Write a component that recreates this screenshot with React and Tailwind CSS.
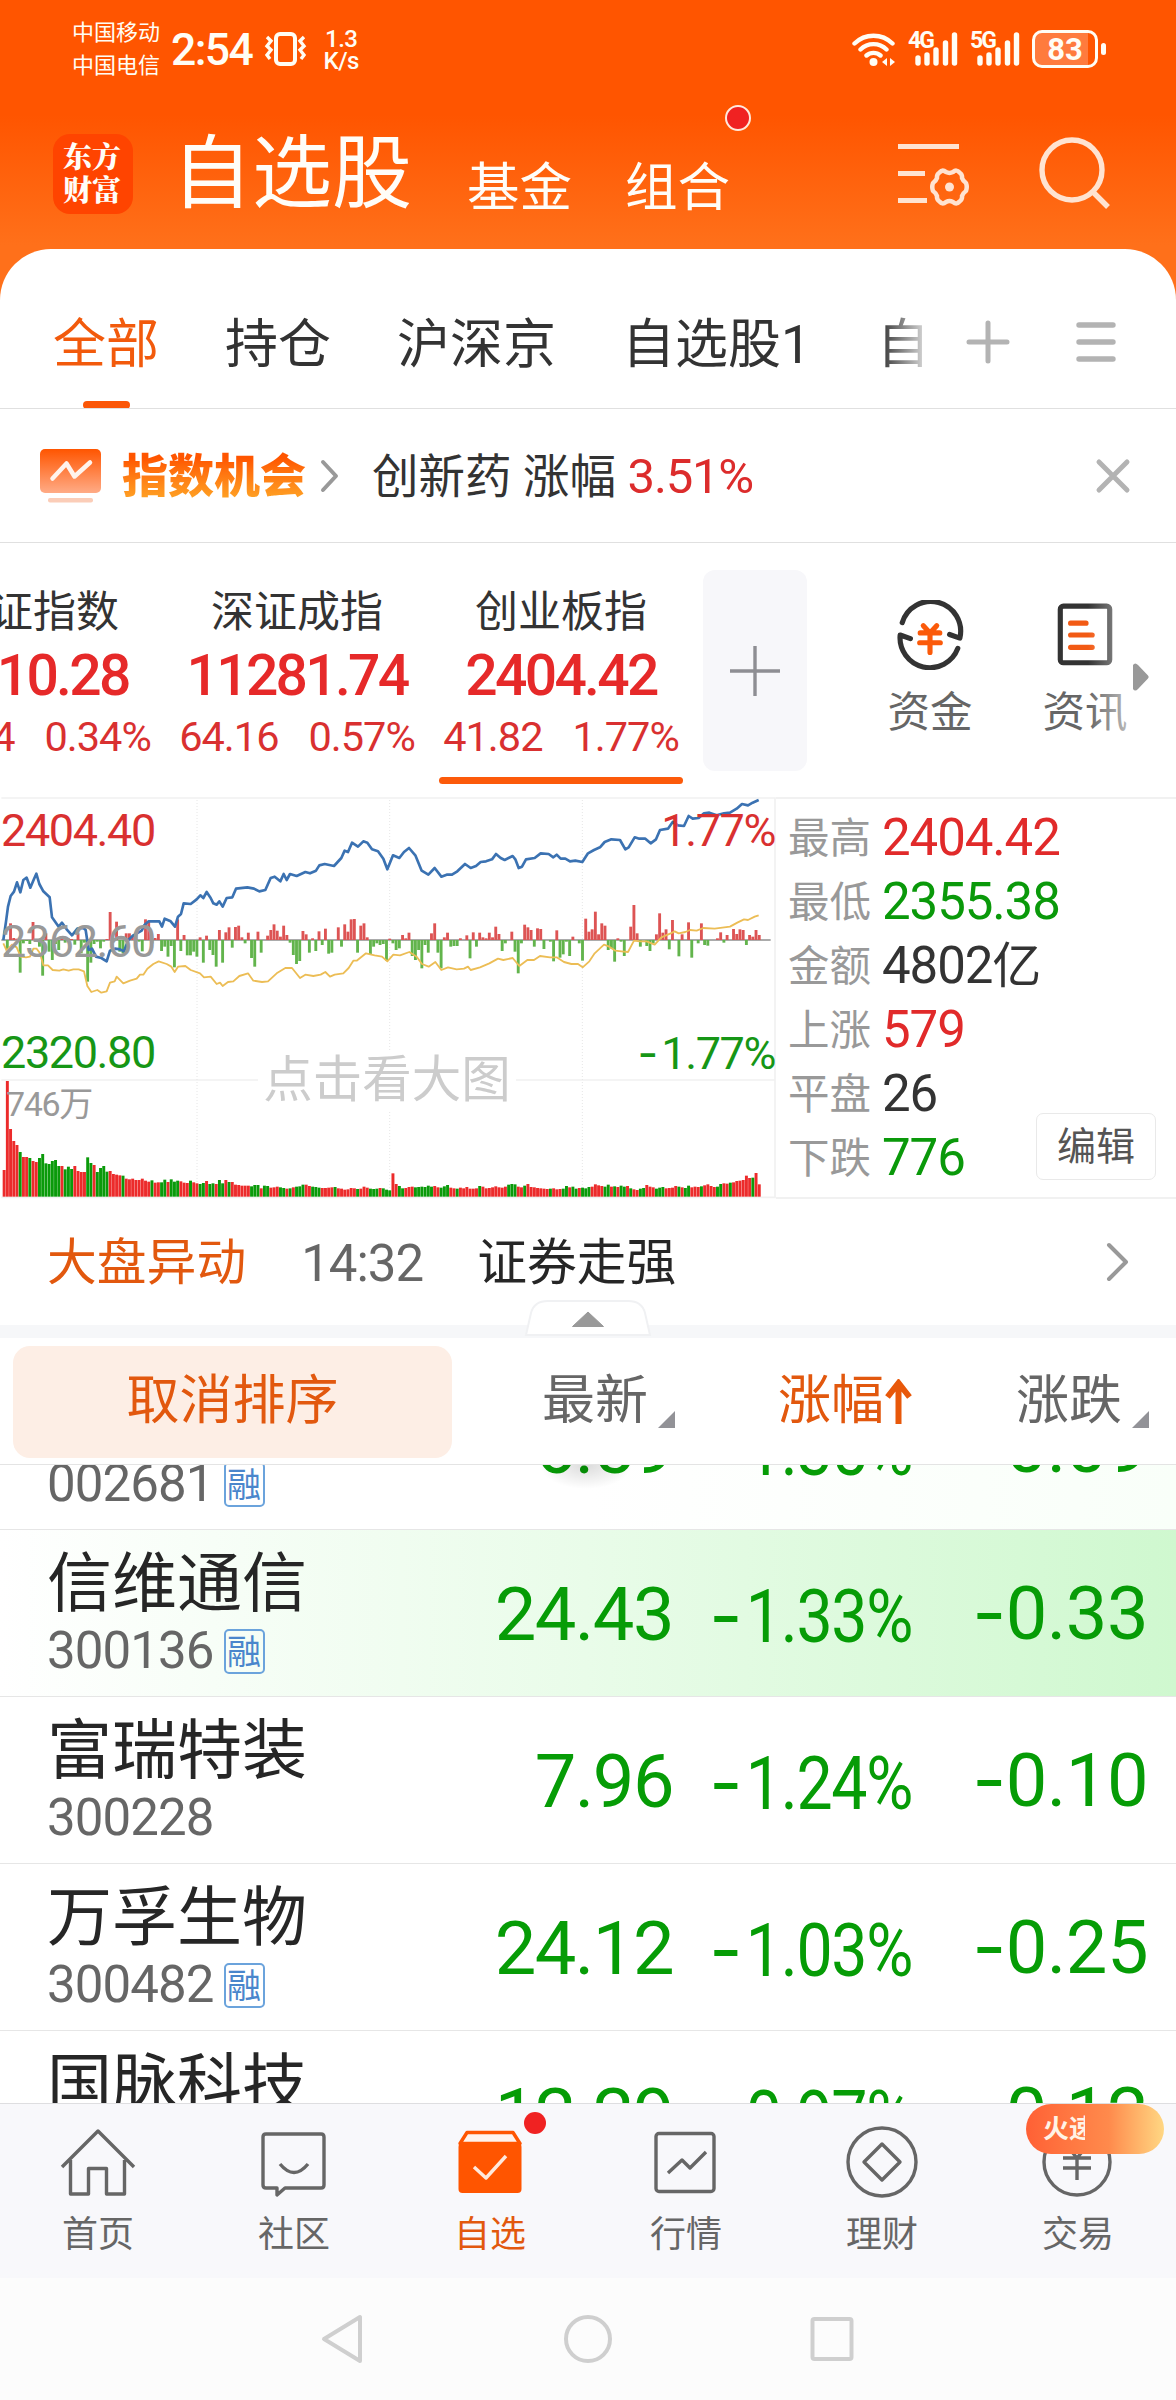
import React from 'react';

const stocks = [
  { name: '德展健康', code: '002681', margin: true, price: '6.59', pct: '1.35%', diff: '0.09', bg: 'bg-linear-to-r from-white from-50% to-[#f9fff9]' },
  { name: '信维通信', code: '300136', margin: true, price: '24.43', pct: '1.33%', diff: '0.33', bg: 'bg-linear-to-r from-white via-[#e9fce9] via-50% to-[#cff8cf]' },
  { name: '富瑞特装', code: '300228', margin: false, price: '7.96', pct: '1.24%', diff: '0.10', bg: 'bg-white' },
  { name: '万孚生物', code: '300482', margin: true, price: '24.12', pct: '1.03%', diff: '0.25', bg: 'bg-white' },
  { name: '国脉科技', code: '002093', margin: true, price: '12.29', pct: '0.97%', diff: '0.12', bg: 'bg-white' },
];

const indexes = [
  { name: '上证指数', value: '3510.28', diff: '11.84', pct: '0.34%' },
  { name: '深证成指', value: '11281.74', diff: '64.16', pct: '0.57%' },
  { name: '创业板指', value: '2404.42', diff: '41.82', pct: '1.77%', active: true },
];

const stats = [
  { label: '最高', value: '2404.42', color: 'text-[#e12a2a]' },
  { label: '最低', value: '2355.38', color: 'text-[#0a990a]' },
  { label: '金额', value: '4802', unit: '亿', color: 'text-[#333]' },
  { label: '上涨', value: '579', color: 'text-[#e12a2a]' },
  { label: '平盘', value: '26', color: 'text-[#333]' },
  { label: '下跌', value: '776', color: 'text-[#0a990a]' },
];

// one entry per minute, chart units
const volumes = [
  80, 347, 203, 167, 155, 134, 119, 119, 116, 107, 104, 116, 128, 100, 98, 107, 110, 92, 92, 82, 90, 83, 92, 77, 74, 74, 118, 101, 95, 74, 86, 92, 75, 77, 68, 66, 64, 63, 54, 52,
  54, 50, 50, 54, 48, 45, 49, 42, 43, 43, 51, 44, 52, 45, 48, 46, 42, 41, 48, 43, 40, 38, 41, 47, 38, 40, 38, 50, 40, 50, 44, 44, 36, 35, 33, 33, 33, 31, 35, 35,
  25, 33, 32, 27, 28, 30, 28, 26, 24, 25, 28, 30, 31, 36, 36, 32, 30, 29, 27, 26, 26, 27, 28, 29, 25, 24, 21, 22, 26, 25, 23, 24, 30, 27, 24, 23, 24, 26, 25, 21,
  19, 70, 38, 32, 25, 26, 29, 30, 28, 29, 30, 29, 33, 30, 32, 28, 27, 31, 35, 27, 25, 24, 27, 25, 29, 24, 24, 25, 32, 30, 25, 26, 28, 31, 28, 27, 30, 36, 38, 37,
  30, 28, 33, 38, 29, 28, 26, 25, 24, 23, 24, 25, 22, 23, 24, 32, 28, 30, 24, 26, 27, 25, 29, 30, 37, 34, 32, 30, 36, 30, 31, 29, 33, 30, 32, 25, 22, 20, 24, 26,
  35, 30, 28, 24, 27, 29, 25, 26, 27, 32, 30, 28, 26, 33, 28, 30, 29, 31, 34, 37, 32, 29, 30, 38, 40, 39, 42, 43, 47, 48, 50, 63, 56, 57, 71, 37,
];
const volumeColors =
  'rrrrrgrrgrrgggggggrgggrrrrggrggggrrrrgrrrrrrrrgrrggrgggrrrgrrggrggrggrgrrrrrrgggrggrrrggrgrgggrrgggrrrrgrrrrrrgrrrgggrgggr' +
  'rggrrrggggggrrgggrrgrrrrrrgrrrrrrrrgggrrgrrrrrrrgrrrggrggrgggrrrrggrgrggrgrrggrrrgggrrrrgrggrrrgrrrrggrrgrrrrrrgrrrr';

const deltas = [
  0, -50, 50, 6, 4, -98, -10, -3, -12, 54, -6, -20, -107, 20, -35, -60, -12, -30, 8, -8, 5, 3, -14, 20, -40, -8, -125, -68, -12, -5, -25, -5, 3, 84, 3, 55, -35, -40, 20, 20,
  12, 24, -5, -34, 62, 55, -10, 6, 18, -33, -20, -50, -18, -82, 62, -33, 15, -46, -46, -35, -50, 8, -68, 13, -30, -45, -80, 30, -68, 23, 38, -23, 39, 43, 8, -10, 22, -54, -80, 25,
  -38, 0, 13, 30, 47, 28, 10, 43, 15, -8, -45, -72, -63, 27, 17, -38, 5, -33, 26, -15, 34, -41, -38, 0, 38, -20, 47, 25, 62, 63, -38, 43, 50, 8, -43, -20, -10, -15, -12, -62,
  4, -10, -30, -25, 15, 5, 22, -48, -60, -30, -85, -15, -38, 20, 50, -38, -85, 8, 22, -20, -18, -18, 5, 0, 14, -55, 23, -20, 22, 8, 5, 22, 8, 40, 18, -33, -10, 0, 25, -35,
  -100, -10, 46, 38, 30, -20, 35, 33, -27, 0, -5, -64, 29, -53, -43, -5, -48, 10, 0, -10, -62, 64, 25, 32, 85, 17, 50, 43, -30, -25, -65, 5, -5, -48, 0, 40, 105, 20, -20, 0,
  -18, -33, -10, 17, 80, 22, 32, -28, 60, 0, -49, 17, 0, 53, -53, 0, -10, 50, -15, -17, 0, 0, 5, 23, -8, 15, 0, 33, 18, 32, 30, -15, 15, 10, 30, 15,
];

const pricePoints =
  '10,480 18,425 24,380 32,348 42,335 51,307 61,337 70,300 80,293 91,323 102,297 109,281 118,312 130,334 149,352 156,412 176,440 186,428 200,448 216,466 232,446 250,444 257,450 266,510 276,506 288,530 304,534 320,544 330,512 345,506 360,508 372,514 385,480 400,466 425,452 434,434 446,424 478,424 486,440 494,416 512,424 525,440 534,410 543,402 551,370 572,372 590,358 601,346 610,354 620,336 632,354 640,370 650,374 658,364 668,380 680,354 697,352 708,326 742,322 762,326 778,334 796,330 812,294 824,290 841,304 851,282 860,300 870,282 890,288 916,276 930,280 948,272 958,256 974,252 1002,258 1024,234 1034,212 1044,216 1056,188 1074,200 1090,184 1102,188 1116,208 1134,214 1150,236 1162,268 1179,226 1198,234 1212,216 1227,204 1246,226 1265,272 1285,284 1304,264 1324,290 1340,284 1356,284 1372,274 1395,252 1412,264 1428,258 1442,246 1458,244 1476,238 1488,222 1502,234 1514,240 1538,228 1546,238 1556,264 1566,260 1578,238 1604,234 1622,220 1646,222 1660,232 1670,224 1682,236 1696,236 1710,244 1726,242 1747,246 1764,220 1782,210 1800,202 1814,186 1834,178 1860,180 1876,208 1886,202 1904,172 1918,176 1936,176 1952,190 1968,178 1980,150 2004,146 2018,126 2034,136 2052,138 2066,108 2078,116 2096,114 2112,100 2128,98 2150,106 2172,100 2190,98 2210,86 2226,72 2244,76 2258,68 2276,60';

const averagePoints =
  '10,490 20,512 36,494 50,502 62,530 78,532 90,530 100,506 110,506 120,520 130,556 144,556 158,570 178,572 190,568 206,572 220,568 236,568 252,574 262,618 274,636 292,630 304,638 320,634 330,608 344,604 350,590 370,610 390,602 410,596 420,584 430,584 442,566 460,552 476,544 500,552 514,560 524,576 534,560 556,558 572,570 600,580 612,592 632,590 650,612 660,608 668,618 684,606 700,604 718,588 744,580 760,602 786,606 804,604 830,580 856,564 876,564 900,594 916,584 940,588 962,584 976,576 990,590 1004,584 1030,580 1046,564 1060,542 1070,542 1098,520 1124,526 1146,530 1162,544 1180,524 1200,526 1228,516 1250,530 1266,552 1286,560 1306,546 1324,570 1344,562 1370,568 1392,566 1404,560 1412,570 1440,562 1468,550 1494,536 1510,540 1538,534 1558,558 1582,540 1602,540 1620,528 1650,532 1670,532 1692,546 1714,552 1734,552 1748,562 1768,544 1784,520 1812,494 1828,500 1846,512 1864,514 1884,516 1902,482 1920,484 1940,484 1964,494 1984,472 2012,460 2024,454 2036,460 2056,456 2070,450 2090,452 2110,444 2144,446 2190,440 2212,428 2232,418 2244,420 2264,410 2276,406';

const StatusBar = () => (
  <div className="h-[98px] flex items-center text-[#fffdf5]">
    <div className="ml-[72px] text-[22px] leading-[33px]">
      <p>中国移动</p>
      <p>中国电信</p>
    </div>
    <span className="ml-[11px] text-[44.500px] leading-none font-medium tracking-[-1.600px] mt-[2px]">2:54</span>
    <svg className="ml-[12px]" width="44" height="36" viewBox="0 0 44 36" fill="none" stroke="currentColor" strokeWidth="4">
      <rect x="12" y="3" width="19" height="30" rx="4" />
      <path d="M3 6l4 4-4 5 4 4-4 5 3 4M40 6l-4 4 4 5-4 4 4 5-3 4" strokeWidth="3.400" />
    </svg>
    <div className="ml-[14px] w-[38px] text-center text-[24px] leading-[22px] font-medium tracking-[-.500px] mt-[2px]">
      <p>1.3</p>
      <p>K/s</p>
    </div>
    <svg className="ml-auto" width="44" height="36" viewBox="0 0 44 36" fill="none" stroke="currentColor" strokeWidth="4.400" strokeLinecap="round">
      <path d="M2.500 12.500a27 27 0 0 1 38 0M8.500 18.500a18.500 18.500 0 0 1 26 0M14.500 24.500a10.500 10.500 0 0 1 14 0" />
      <circle cx="21.500" cy="31" r="4" fill="currentColor" stroke="none" />
      <path d="M35 27v8l-5-4zM38 27v8l5-4z" fill="currentColor" stroke="none" />
    </svg>
    <Signal label="4G" />
    <Signal label="5G" />
    <div className="ml-[12px] mr-[70px] flex items-center gap-[3px]">
      <div className="w-[66px] h-[38px] rounded-[10px] border-[3px] border-current bg-linear-to-r from-[#ff7b3d] from-88% to-[#ff5500] to-88% text-[31px] leading-[33px] font-bold text-center">83</div>
      <div className="w-[5px] h-[12px] rounded bg-current"></div>
    </div>
  </div>
);

const Signal = ({ label }) => (
  <div className="ml-[12px] w-[50px] h-[36px] relative">
    <span className="absolute left-0 top-0 text-[23px] leading-[20px] font-bold tracking-[-2px]">{label}</span>
    <svg className="absolute left-[7px] top-0" width="43" height="36" viewBox="0 0 43 36" stroke="currentColor" strokeWidth="5.400" strokeLinecap="round">
      <path d="M3 27v5M12 24v8M21 19v13M30.500 12v20M39.500 4v28" />
    </svg>
  </div>
);

const TitleBar = () => (
  <div className="h-[151px] flex items-start text-[#fffdf8]">
    <div className="ml-[53px] mt-[36px] w-[80px] h-[80px] rounded-[17px] bg-[#ff4400] font-['Noto_Serif_CJK_SC','Noto_Sans_CJK_SC',serif] font-black text-[29px] leading-[33px] text-center pt-[5px] pr-[2px]">
      <p>东方</p>
      <p>财富</p>
    </div>
    <h1 className="ml-[39px] mt-[36px] text-[80px] leading-[80px]">自选股</h1>
    <span className="ml-[55px] mt-[60px] text-[52.500px] leading-[60px]">基金</span>
    <span className="ml-[53px] mt-[60px] text-[52.500px] leading-[60px]">组合</span>
    <div className="-ml-[5px] mt-[7px] w-[26px] h-[26px] rounded-full border-2 border-[#ffe9dc] bg-[#f02222]"></div>
    <svg className="ml-auto mt-[44px]" width="74" height="66" viewBox="0 0 74 66" fill="none" stroke="#ffe3d1" strokeWidth="5">
      <path d="M0 4.500h61M0 31.500h27M0 58.500h29" />
      <path d="M41.500 30.500q3-3.500 6.500-.500 3.500 1.800 7 0 3.500-3 6.500.500 3 2 2.500 5.500 1 3 4 5 1.500 4 0 8-3 2-4 5 .500 3.500-2.500 5.500-3 3.500-6.500.500-3.500-1.800-7 0-3.500 3-6.500-.500-3-2-2.500-5.500-1-3-4-5-1.500-4 0-8 3-2 4-5-.500-3.500 2.500-5.500z" strokeWidth="4.500" strokeLinejoin="round" />
      <circle cx="51.500" cy="45" r="4.500" fill="#ffe3d1" stroke="none" />
    </svg>
    <svg className="ml-[67px] mr-[65px] mt-[37px]" width="72" height="76" viewBox="0 0 72 76" fill="none" stroke="#ffe3d1" strokeWidth="5.400">
      <circle cx="33" cy="35" r="30" />
      <path d="M54 57l15 15" />
    </svg>
  </div>
);

const Tabs = () => (
  <div className="h-[160px] flex border-b border-[#e0e0e0] text-[53px] text-[#333]">
    <div className="w-[930px] overflow-hidden relative flex gap-[66px] pl-[53px] pt-[66px] leading-[60px] whitespace-nowrap shrink-0">
      <span className="text-[#f25a0c] relative">
        全部
        <i className="absolute left-[30px] top-[86px] w-[47px] h-[8px] rounded-full bg-[#fb5607]"></i>
      </span>
      <span>持仓</span>
      <span>沪深京</span>
      <span>自选股1</span>
      <span className="w-[46px] overflow-hidden">自</span>
      <div className="absolute right-0 top-0 w-[50px] h-[140px] bg-linear-to-r from-white/0 to-white/90"></div>
    </div>
    <svg className="ml-[36px] mt-[71px]" width="44" height="44" viewBox="0 0 44 44" stroke="#b3b3b3" strokeWidth="5" strokeLinecap="round">
      <path d="M3 22h38M22 3v38" />
    </svg>
    <svg className="ml-[64px] mt-[72px]" width="44" height="42" viewBox="0 0 44 42" stroke="#b3b3b3" strokeWidth="5.400" strokeLinecap="round">
      <path d="M5 4h34M5 21h34M5 38h34" />
    </svg>
  </div>
);

const Notice = () => (
  <div className="h-[134px] flex items-center border-b border-[#e0e0e0]">
    <svg className="ml-[40px]" width="62" height="54" viewBox="0 0 62 54">
      <defs>
        <linearGradient id="noticeIcon" x1="0" y1="0" x2="0" y2="1">
          <stop offset="0" stopColor="#ff5500" />
          <stop offset="1" stopColor="#ffab86" />
        </linearGradient>
      </defs>
      <rect x="0" y="0" width="61" height="44" rx="5" fill="url(#noticeIcon)" />
      <path d="M12.500 29.500l14-15 8 13 15.500-14" fill="none" stroke="#fff3ec" strokeWidth="4.500" strokeLinecap="round" strokeLinejoin="round" />
      <rect x="8" y="49" width="45" height="4.500" rx="2" fill="#fbcdb8" />
    </svg>
    <span className="ml-[20px] text-[46px] leading-[60px] font-black bg-linear-to-b from-[#ff5500] from-20% to-[#ff9e22] to-85% bg-clip-text text-transparent">指数机会</span>
    <svg className="ml-[14px]" width="20" height="34" viewBox="0 0 20 34" fill="none" stroke="#999" strokeWidth="4" strokeLinecap="round" strokeLinejoin="round">
      <path d="M3 3l13 14L3 31" />
    </svg>
    <p className="ml-[32px] mt-[2px] text-[46.500px] leading-[60px] text-[#333] whitespace-pre">创新药 涨幅 <span className="text-[#dc2c2c] text-[49px] tracking-[-1.200px]">3.51%</span></p>
    <svg className="ml-auto mr-[44px] mt-px" width="38" height="38" viewBox="0 0 38 38" stroke="#b3b3b3" strokeWidth="5" strokeLinecap="round">
      <path d="M5 5l28 28M33 5L5 33" />
    </svg>
  </div>
);

const IndexBar = () => (
  <div className="h-[254px] flex overflow-hidden">
    {indexes.map((item) => (
      <div key={item.name} className="w-[264px] shrink-0 first:-ml-[99px] flex flex-col items-center pt-[38px] whitespace-nowrap">
        <p className="text-[43px] leading-[62px] text-[#333]">{item.name}</p>
        <p className="text-[57px] leading-[66px] font-medium tracking-[-2.700px] text-[#e62929]">{item.value}</p>
        <p className="-mt-[2px] flex gap-[30px] text-[41.500px] leading-[60px] tracking-[-1px] text-[#d93030]">
          <span>{item.diff}</span>
          <span>{item.pct}</span>
        </p>
        {item.active && <div className="mt-[10px] w-[244px] h-[7px] rounded-full bg-[#fc5a0a]"></div>}
      </div>
    ))}
    <div className="ml-[10px] mt-[27px] w-[104px] h-[201px] rounded-[12px] bg-[#f7f7fa] flex items-center justify-center shrink-0">
      <svg width="50" height="50" viewBox="0 0 50 50" stroke="#8e8e93" strokeWidth="3.400">
        <path d="M0 25h50M25 0v50" />
      </svg>
    </div>
    <div className="ml-[80px] mt-[57px] w-[86px] flex flex-col items-center shrink-0 whitespace-nowrap">
      <svg width="70" height="70" viewBox="0 0 68 68" fill="none" stroke="#333" strokeWidth="5" strokeLinecap="round" strokeLinejoin="round">
        <path d="M7 22A29 29 0 0 1 63 37l-10-3.500M61 47A29 29 0 0 1 5 34l10 3.500" />
        <path d="M27.500 25l6.500 7 6.500-7M34 32v19M24.500 32h19M24 41.500h20" stroke="#fb5a0a" />
      </svg>
      <p className="mt-[13px] text-[42.500px] leading-[60px] text-[#666]">资金</p>
    </div>
    <div className="ml-[69px] mt-[57px] w-[86px] flex flex-col items-center shrink-0 relative whitespace-nowrap">
      <svg width="70" height="70" viewBox="0 0 68 68" fill="none" stroke="#333" strokeWidth="5" strokeLinecap="round">
        <rect x="10" y="6" width="48" height="55" rx="3" />
        <path d="M20 22.500h15M20 34h21M20 46h21" stroke="#f25a14" />
      </svg>
      <p className="mt-[13px] text-[42.500px] leading-[60px] text-[#666]">资讯</p>
      <div className="absolute right-0 top-0 w-[40px] h-[150px] bg-linear-to-r from-white/0 to-white/55"></div>
    </div>
    <svg className="ml-[4px] mt-[119px] shrink-0" width="18" height="30" viewBox="0 0 18 30">
      <path d="M1 3q2-3 5 0l10 10.500q1.500 1.500 0 3L6 27q-3 3-5 0z" fill="#999" />
    </svg>
  </div>
);

const Chart = () => (
  <div className="w-[776px] h-[402px] relative text-[45px] leading-[45px] tracking-[-1.400px] shrink-0">
    <svg className="block" width="776" height="402" viewBox="0 51 2328 1206" fill="none">
      <path d="M4 54H2325V1252H4M4 900H774M1548 900H2325" stroke="#f1f1f1" strokeWidth="5" />
      <path d="M591 60V1250M1169 60V1250M1747 60V1250" stroke="#e6e6e6" strokeWidth="3" strokeDasharray="3 6" />
      <path d="M4 480H2312" stroke="#8f8f8f" strokeWidth="5" />
      {deltas.map((d, i) => (
        <rect key={i} x={8 + i * 9.64} y={d > 0 ? 480 - d : 480} width="8.600" height={Math.abs(d)} fill={d > 0 ? '#dd5454' : '#62b44c'} />
      ))}
      {volumes.map((v, i) => (
        <rect key={i} x={8 + i * 9.64} y={1250 - v} width="8.800" height={v} fill={volumeColors[i] === 'g' ? '#0a9a0a' : '#ec2b2b'} />
      ))}
      <polyline points={averagePoints} stroke="#ecbd55" strokeWidth="5.500" strokeLinejoin="round" />
      <polyline points={pricePoints} stroke="#3b72b2" strokeWidth="8" strokeLinejoin="round" />
    </svg>
    <span className="absolute left-[1px] top-[11px] text-[#d93030]">2404.40</span>
    <span className="absolute left-[1px] top-[122px] text-[#999]">2362.60</span>
    <span className="absolute left-[1px] top-[233px] text-[#169616]">2320.80</span>
    <span className="absolute right-px top-[11px] text-[#d93030]">1.77%</span>
    <span className="absolute right-px top-[233px] text-[#169616]"><span className="font-['Inter'] tracking-[3px]">-</span>1.77%</span>
    <span className="absolute left-[6px] top-[284px] text-[34px] leading-[46px] text-[#999]">746万</span>
    <span className="absolute left-[258px] top-[253px] w-[258px] bg-white text-center text-[49.500px] leading-[60px] tracking-normal text-[#ccc]">点击看大图</span>
  </div>
);

const MarketPanel = () => (
  <div className="h-[402px] flex">
    <Chart />
    <div className="flex-1 border-y-2 border-[#f1f1f1] pl-[12px] pt-[8px] relative">
      {stats.map((s) => (
        <div key={s.label} className="h-[64px] flex items-center gap-[11px]">
          <span className="text-[41.500px] leading-[60px] text-[#999]">{s.label}</span>
          <span className={`-mt-px text-[51px] leading-[60px] tracking-[-1.100px] ${s.color}`}>{s.value}<span className="text-[49px]">{s.unit}</span></span>
        </div>
      ))}
      <button className="absolute right-[20px] bottom-[17px] w-[120px] h-[67px] rounded-[7px] border border-[#e9e9e9] bg-white text-[39px] leading-[60px] text-[#555]">编辑</button>
    </div>
  </div>
);

const News = () => (
  <div className="h-[126px] pt-[2px] flex items-center text-[49.800px] leading-[60px] relative">
    <span className="ml-[47px] text-[#e2580e]">大盘异动</span>
    <span className="ml-[55px] mt-[2px] text-[51px] tracking-[-1px] text-[#666]">14:32</span>
    <span className="ml-[54px] text-[#262626]">证券走强</span>
    <svg className="ml-auto mr-[47px] -mt-[2px]" width="24" height="42" viewBox="0 0 24 42" fill="none" stroke="#999" strokeWidth="4" strokeLinecap="round" strokeLinejoin="round">
      <path d="M4 4l17 17L4 38" />
    </svg>
    <svg className="absolute left-[524px] -bottom-[12px]" width="128" height="38" viewBox="0 0 128 38">
      <path d="M2 36L7 14Q10 2 24 2H104Q118 2 121 14L126 36z" fill="#fff" stroke="#f0f1f3" strokeWidth="2" />
      <path d="M64 13L79.500 27.500H48.500z" fill="#999" stroke="#999" strokeLinejoin="round" />
    </svg>
  </div>
);

const Corner = () => (
  <svg className="mt-[36px] ml-[10px]" width="17" height="17" viewBox="0 0 17 17">
    <path d="M17 0v17H0z" fill="#929297" />
  </svg>
);

const SortHeader = () => (
  <div className="h-[127px] flex items-center border-b border-[#e4e4e4] text-[53px] leading-[60px] text-[#666]">
    <button className="ml-[13px] mt-px w-[439px] h-[112px] rounded-[17px] bg-[#fdeee5] text-[#e2580e] pb-[2px]">取消排序</button>
    <div className="w-[223px] flex items-center justify-end">最新<Corner /></div>
    <div className="w-[237px] flex items-center justify-end text-[#e2580e]">
      涨幅
      <svg className="ml-px mt-[2px]" width="27" height="46" viewBox="0 0 27 46" fill="none" stroke="#e8580a" strokeWidth="6">
        <path d="M13.500 45V4M2.500 18l11-14 11 14" />
      </svg>
    </div>
    <div className="w-[237px] flex items-center justify-end">涨跌<Corner /></div>
  </div>
);

const StockRow = ({ stock }) => (
  <div className={`h-[167px] flex border-b border-[#e6e6e6] ${stock.bg}`}>
    <div className="w-[460px] pl-[47px] pt-[18px]">
      <p className="text-[65px] leading-[72px] text-[#262626]">{stock.name}</p>
      <div className="h-[62px] flex items-center">
        <span className="text-[51px] leading-[56px] tracking-[-.900px] text-[#666]">{stock.code}</span>
        {stock.margin && (
          <span className="ml-[10px] w-[41px] h-[45px] rounded-[5px] border-2 border-[#6ba3dc] text-[34px] leading-[42px] text-[#4a86cc] flex justify-center">融</span>
        )}
      </div>
    </div>
    <div className="flex pt-[45px] text-[74px] leading-[80px] tracking-[-1.500px] text-[#069c06] text-right whitespace-nowrap">
      <p className="w-[213px]">{stock.price}</p>
      <p className="w-[239px] origin-right scale-x-[.87]"><span className="font-['Inter'] inline-block origin-right scale-x-[1.120] mr-[5px]">-</span>{stock.pct}</p>
      <p className="w-[236px] -mt-[3px] tracking-[-.500px]"><span className="font-['Inter']">-</span>{stock.diff}</p>
    </div>
  </div>
);

const NavItem = ({ label, active, children }) => (
  <div className={`flex-1 flex flex-col items-center pt-[21px] relative ${active ? 'text-[#e2580e]' : 'text-[#666]'}`}>
    <svg width="76" height="76" viewBox="0 0 76 76" fill="none" stroke="currentColor" strokeWidth="3.400" strokeLinejoin="round">
      {children}
    </svg>
    <span className="mt-[4px] text-[36px] leading-[60px]">{label}</span>
    {active && <i className="absolute left-[132px] top-[8px] w-[22px] h-[22px] rounded-full bg-[#f02222]"></i>}
  </div>
);

const BottomNav = () => (
  <nav className="h-[175px] flex border-t border-[#dedee0] bg-[#f8f8fb] relative">
    <NavItem label="首页">
      <path d="M2 42L38 6l36 36M10.500 35v34h18V43.500h18V69h18V35" />
    </NavItem>
    <NavItem label="社区">
      <path d="M10 9h55q3 0 3 3v48q0 3-3 3H29l-8 7v-7H10q-3 0-3-3V12q0-3 3-3zM24 39q14 17 28 0" />
    </NavItem>
    <NavItem label="自选" active>
      <path d="M15 7.500h46l7 11H8z" fill="#fff3ec" stroke="#ff5500" />
      <rect x="6.500" y="18" width="63" height="50" rx="4" fill="#ff5500" stroke="none" />
      <path d="M22 42l12 11 20-22" stroke="#ffe9dc" />
    </NavItem>
    <NavItem label="行情">
      <rect x="8" y="8.500" width="58" height="58" rx="3" />
      <path d="M20 48l14-13 8 8 16-16" />
    </NavItem>
    <NavItem label="理财">
      <circle cx="38" cy="37" r="34" />
      <path d="M38 19l18 18-18 18-18-18z" />
    </NavItem>
    <NavItem label="交易">
      <circle cx="37" cy="37" r="33" />
      <path d="M27 21l10 12 10-12M37 33v22M23 33h28M23 43h28" />
    </NavItem>
    <div className="absolute right-[12px] top-0 w-[138px] h-[50px] rounded-[25px] bg-linear-to-r from-[#ff6035] via-[#ff8a4c] via-60% to-[#ffd783] pl-[17px]">
      <p className="w-[42px] overflow-hidden whitespace-nowrap text-[26px] leading-[51px] font-bold text-[#fff3e6]">火速</p>
    </div>
  </nav>
);

const SystemNav = () => (
  <div className="h-[122px] flex items-center bg-[#fcfcfc]">
    <svg className="ml-[319px]" width="46" height="52" viewBox="0 0 46 52" fill="none" stroke="#cfcfcf" strokeWidth="4" strokeLinejoin="round">
      <path d="M41 4v44L5 26z" />
    </svg>
    <svg className="ml-[197px]" width="52" height="52" viewBox="0 0 52 52" fill="none" stroke="#cfcfcf" strokeWidth="4">
      <circle cx="26" cy="26" r="22" />
    </svg>
    <svg className="ml-[195px]" width="46" height="46" viewBox="0 0 46 46" fill="none" stroke="#cfcfcf" strokeWidth="4">
      <rect x="3.500" y="3" width="39" height="40" rx="2" />
    </svg>
  </div>
);

export default function App() {
  return (
    <div className="w-[1176px] h-[2400px] overflow-hidden flex flex-col font-['Roboto','Noto_Sans_CJK_SC',sans-serif] bg-[linear-gradient(180deg,#ff5500_0,#ff5500_115px,#ff701a_245px)]">
      <StatusBar />
      <TitleBar />
      <div className="flex-1 flex flex-col rounded-t-[51px] bg-white overflow-hidden">
        <Tabs />
        <Notice />
        <IndexBar />
        <MarketPanel />
        <News />
        <div className="h-[13px] bg-[#f6f7f9]"></div>
        <SortHeader />
        <div className="h-[638px] overflow-hidden relative">
          <div className="-mt-[102px]">
            {stocks.map((stock) => (
              <StockRow key={stock.code} stock={stock} />
            ))}
          </div>
          <div className="absolute left-[540px] -top-[24px] w-[92px] h-[48px] bg-[radial-gradient(closest-side,rgba(0,0,0,.14),transparent)]"></div>
        </div>
        <BottomNav />
        <SystemNav />
      </div>
    </div>
  );
}
